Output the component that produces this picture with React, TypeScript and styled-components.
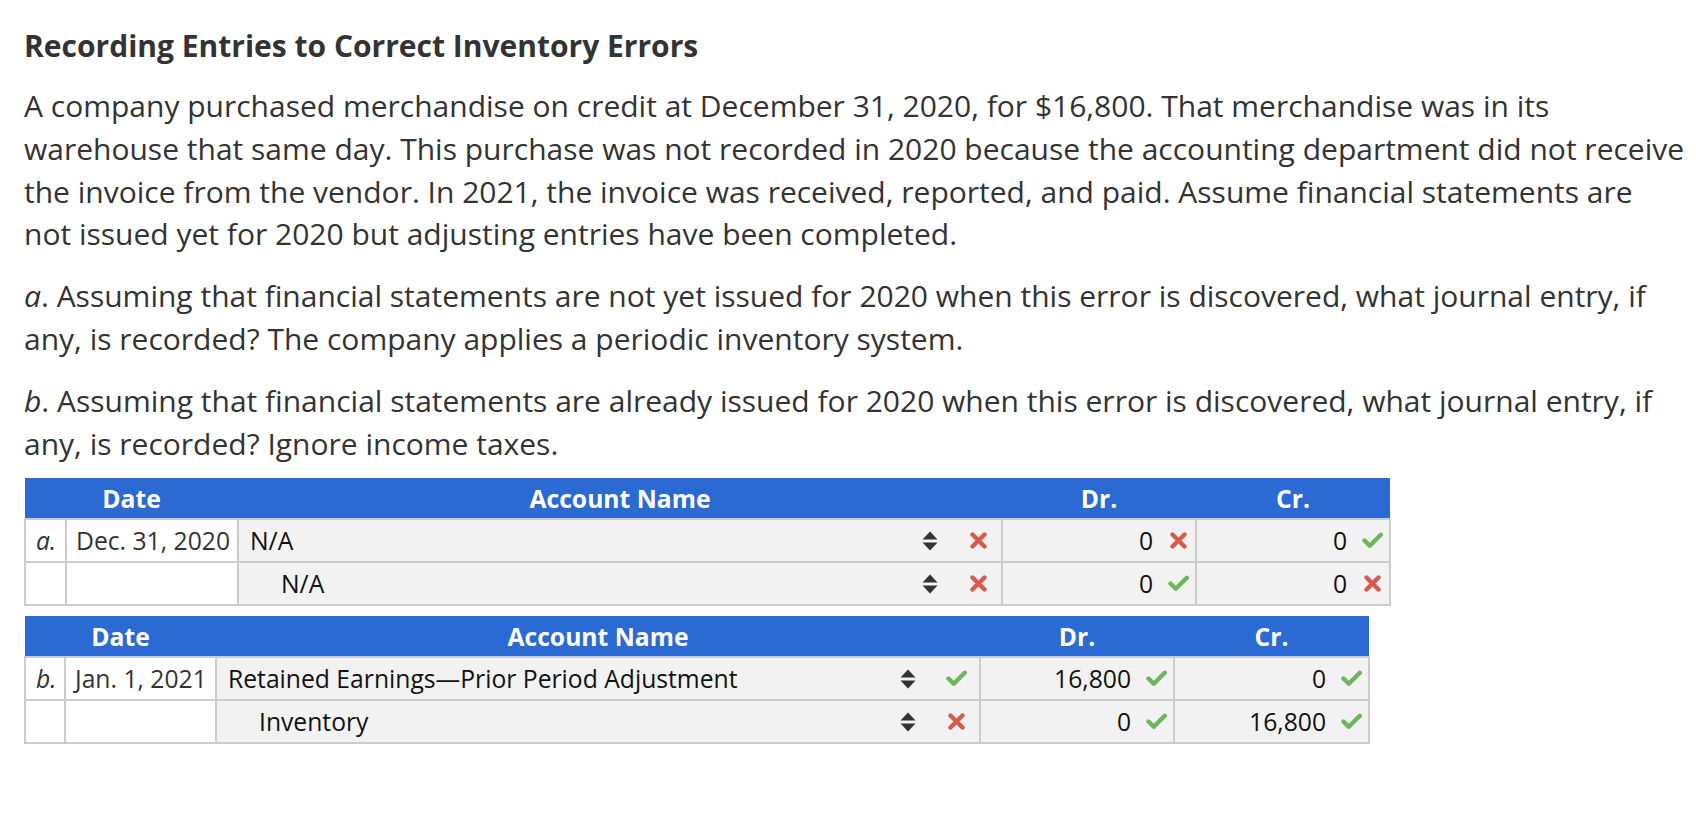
import React from "react";
import styled, { createGlobalStyle } from "styled-components";

const Global = createGlobalStyle`
  html, body { margin: 0; padding: 0; background: #ffffff; }
  body { font-family: "Open Sans", "Noto Sans", "Liberation Sans", sans-serif; color: #333333; }
`;

const Page = styled.div`
  padding: 29px 4px 40px 24px;
`;

const Title = styled.h2`
  margin: 0;
  font-size: 30px;
  line-height: 34px;
  font-weight: 700;
  color: #333333;
`;

const Para = styled.p`
  margin: 19px 0 0 0;
  font-size: 30px;
  line-height: 42.8px;
  color: #333333;
  &:first-of-type { margin-top: 22px; }
`;

const Journal = styled.table<{ $w: number; $mt: number }>`
  width: ${(p) => p.$w}px;
  margin-top: ${(p) => p.$mt}px;
  border-collapse: collapse;
  table-layout: fixed;
  font-size: 24.7px;
`;

const Col = styled.col<{ $w: number }>`
  width: ${(p) => p.$w}px;
`;

const HeadCell = styled.th`
  background: #2b69d3;
  color: #ffffff;
  font-weight: 700;
  font-size: 24.7px;
  height: 40px;
  padding: 0;
  text-align: center;
  border: 0;
`;

const Cell = styled.td<{ $shade?: boolean }>`
  height: 41px;
  padding: 0;
  border: 2px solid #cccccc;
  background: ${(p) => (p.$shade ? "#f2f2f2" : "#ffffff")};
  vertical-align: middle;
  white-space: nowrap;
`;

const Letter = styled.span`
  display: block;
  font-style: italic;
  color: #333333;
  padding-left: 10px;
`;

const DateText = styled.span`
  display: block;
  color: #333333;
  padding-left: 9px;
`;

const AccountBox = styled.div<{ $indent: boolean }>`
  display: flex;
  align-items: center;
  padding: 0 12px 0 ${(p) => (p.$indent ? 42 : 11)}px;
`;

const AccountName = styled.span`
  flex: 1;
  color: #111111;
`;

const ArrowSlot = styled.span`
  width: 16px;
  height: 20px;
  margin-right: 29px;
  display: flex;
  align-items: center;
  justify-content: center;
`;

const MarkSlot = styled.span`
  width: 22px;
  height: 20px;
  display: flex;
  align-items: center;
  justify-content: center;
`;

const AmountBox = styled.div`
  display: flex;
  align-items: center;
  justify-content: flex-end;
  gap: 14px;
  padding-right: 6px;
  color: #111111;
`;

const Arrows = () => (
  <svg width="16" height="20" viewBox="0 0 16 20">
    <path d="M8 0.5 L15.5 8.6 L0.5 8.6 Z" fill="#333333" />
    <path d="M0.5 11.4 L15.5 11.4 L8 19.5 Z" fill="#333333" />
  </svg>
);

const Cross = () => (
  <svg width="17" height="17" viewBox="0 0 17 17">
    <path d="M2.5 2.5 L14.5 14.5 M14.5 2.5 L2.5 14.5" stroke="#d65a4e" strokeWidth="4.4" strokeLinecap="round" fill="none" />
  </svg>
);

const Check = () => (
  <svg width="21" height="17" viewBox="0 0 21 17">
    <path d="M2.5 8.5 L7.8 13.8 L18.8 2.8" stroke="#6cb75c" strokeWidth="4.4" strokeLinecap="round" strokeLinejoin="round" fill="none" />
  </svg>
);

const Mark = ({ ok }: { ok: boolean }) => <MarkSlot>{ok ? <Check /> : <Cross />}</MarkSlot>;

type Line = {
  letter?: string;
  date?: string;
  account: string;
  accountOk: boolean;
  dr: string;
  drOk: boolean;
  cr: string;
  crOk: boolean;
  indent: boolean;
};

type Entry = {
  width: number;
  mt: number;
  cols: number[];
  lines: Line[];
};

const entries: Entry[] = [
  {
    width: 1365,
    mt: 13,
    cols: [41, 172, 764, 194, 194],
    lines: [
      { letter: "a.", date: "Dec. 31, 2020", account: "N/A", accountOk: false, dr: "0", drOk: false, cr: "0", crOk: true, indent: false },
      { account: "N/A", accountOk: false, dr: "0", drOk: true, cr: "0", crOk: false, indent: true },
    ],
  },
  {
    width: 1344,
    mt: 10,
    cols: [40, 151, 764, 194, 195],
    lines: [
      { letter: "b.", date: "Jan. 1, 2021", account: "Retained Earnings—Prior Period Adjustment", accountOk: true, dr: "16,800", drOk: true, cr: "0", crOk: true, indent: false },
      { account: "Inventory", accountOk: false, dr: "0", drOk: true, cr: "16,800", crOk: true, indent: true },
    ],
  },
];

const JournalTable = ({ entry }: { entry: Entry }) => (
  <Journal $w={entry.width} $mt={entry.mt}>
    <colgroup>
      {entry.cols.map((w, i) => (
        <Col key={i} $w={w} />
      ))}
    </colgroup>
    <thead>
      <tr>
        <HeadCell colSpan={2}>Date</HeadCell>
        <HeadCell>Account Name</HeadCell>
        <HeadCell>Dr.</HeadCell>
        <HeadCell>Cr.</HeadCell>
      </tr>
    </thead>
    <tbody>
      {entry.lines.map((l, i) => (
        <tr key={i}>
          <Cell>{l.letter && <Letter>{l.letter}</Letter>}</Cell>
          <Cell>{l.date && <DateText>{l.date}</DateText>}</Cell>
          <Cell $shade>
            <AccountBox $indent={l.indent}>
              <AccountName>{l.account}</AccountName>
              <ArrowSlot>
                <Arrows />
              </ArrowSlot>
              <Mark ok={l.accountOk} />
            </AccountBox>
          </Cell>
          <Cell $shade>
            <AmountBox>
              <span>{l.dr}</span>
              <Mark ok={l.drOk} />
            </AmountBox>
          </Cell>
          <Cell $shade>
            <AmountBox>
              <span>{l.cr}</span>
              <Mark ok={l.crOk} />
            </AmountBox>
          </Cell>
        </tr>
      ))}
    </tbody>
  </Journal>
);

export default function App() {
  return (
    <>
      <Global />
      <Page>
        <Title>Recording Entries to Correct Inventory Errors</Title>
        <Para>
          A company purchased merchandise on credit at December 31, 2020, for $16,800. That merchandise was in its
          warehouse that same day. This purchase was not recorded in 2020 because the accounting department did not
          receive the invoice from the vendor. In 2021, the invoice was received, reported, and paid. Assume financial
          statements are
          <br />
          not issued yet for 2020 but adjusting entries have been completed.
        </Para>
        <Para>
          <i>a</i>. Assuming that financial statements are not yet issued for 2020 when this error is discovered, what
          journal entry, if any, is recorded? The company applies a periodic inventory system.
        </Para>
        <Para>
          <i>b</i>. Assuming that financial statements are already issued for 2020 when this error is discovered, what
          journal entry, if any, is recorded? Ignore income taxes.
        </Para>
        <JournalTable entry={entries[0]} />
        <JournalTable entry={entries[1]} />
      </Page>
    </>
  );
}
